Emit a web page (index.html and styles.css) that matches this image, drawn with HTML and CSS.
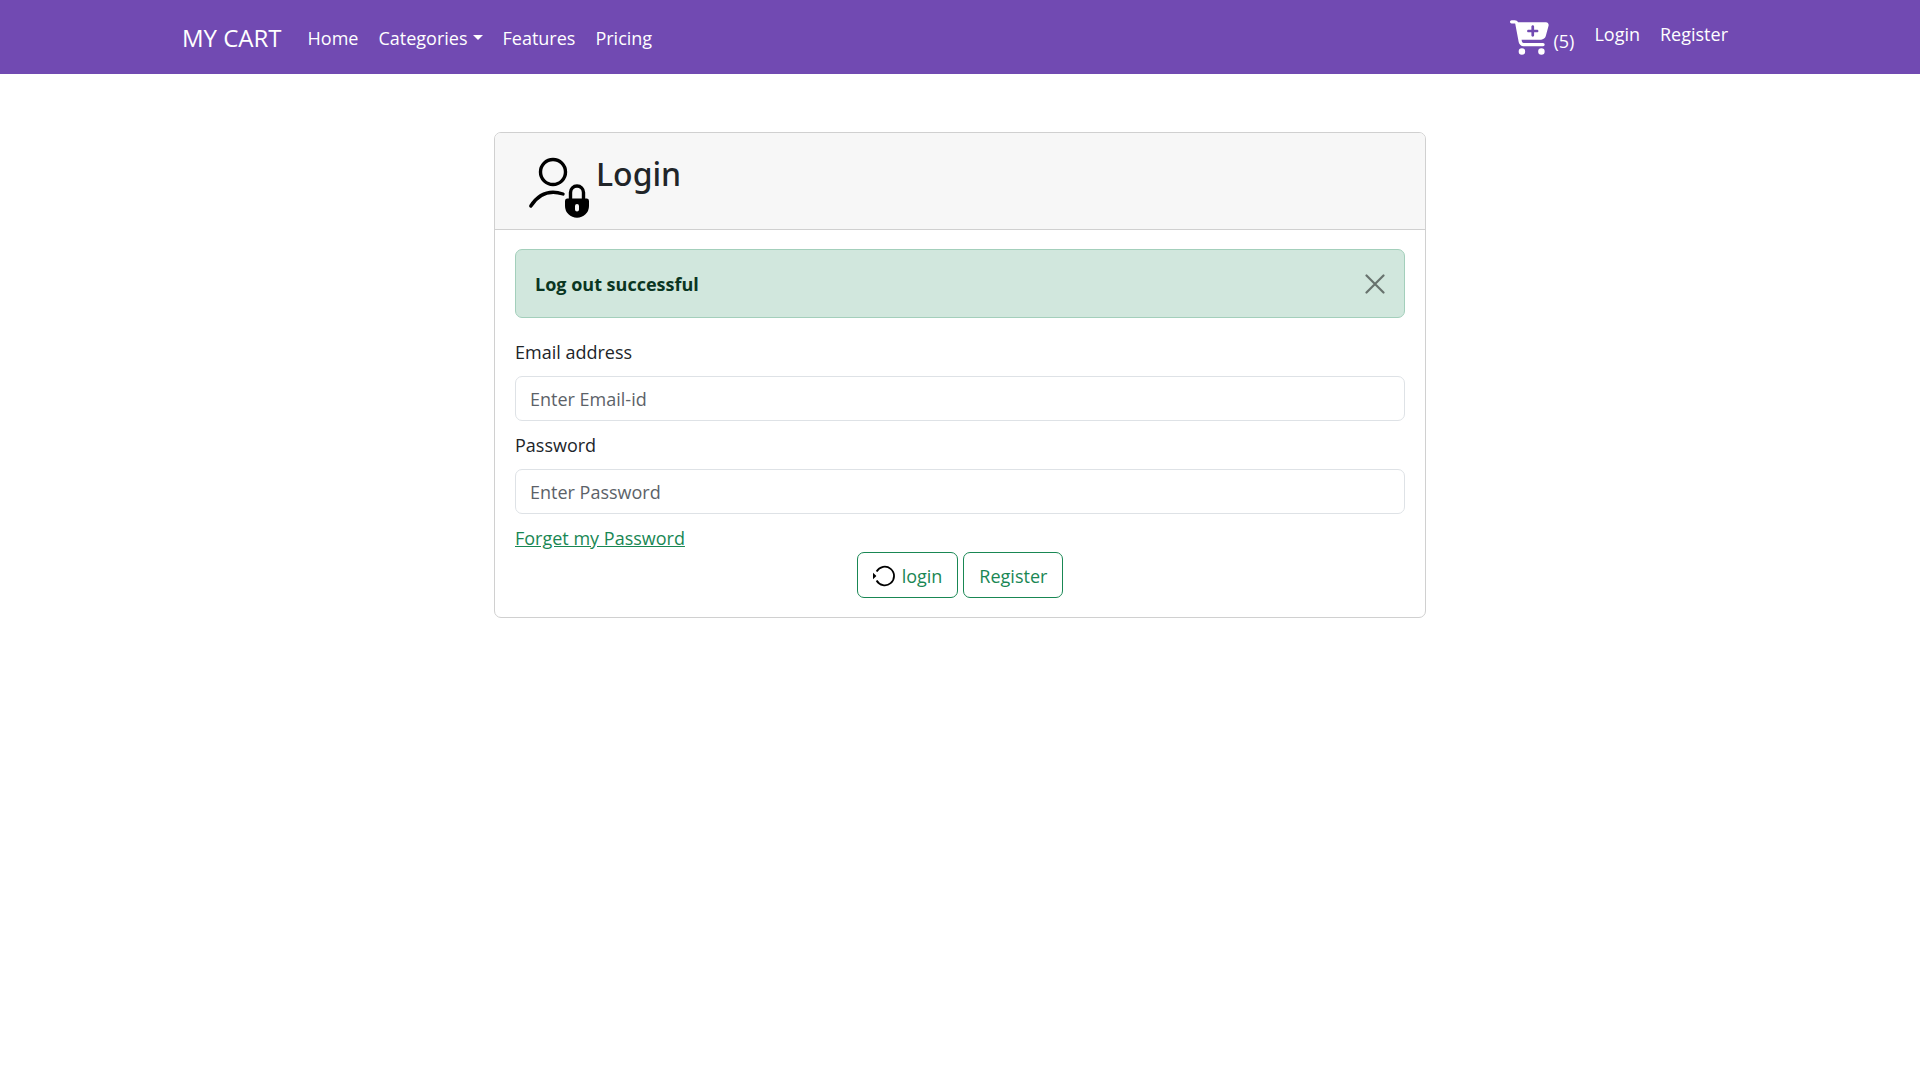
FILE: index.html
```html
<!DOCTYPE html>
<html lang="en">
<head>
<meta charset="utf-8">
<meta name="viewport" content="width=device-width, initial-scale=1">
<title>Login</title>
<link rel="stylesheet" href="styles.css">
</head>
<body>
<nav class="navbar">
  <div class="container">
    <a class="brand" href="#">MY CART</a>
    <ul class="nav-list">
      <li><a class="nav-link" href="#">Home</a></li>
      <li><a class="nav-link dropdown" href="#">Categories</a></li>
      <li><a class="nav-link" href="#">Features</a></li>
      <li><a class="nav-link" href="#">Pricing</a></li>
    </ul>
    <ul class="nav-list nav-user">
      <li><a class="nav-link cart" href="#" aria-label="Cart, 5 items">
        <svg class="cart-icon" viewBox="0 0 576 512" aria-hidden="true"><path fill="currentColor" d="M0 24C0 10.7 10.7 0 24 0H69.5c22 0 41.5 12.8 50.6 32h411c26.3 0 45.5 25 38.6 50.4l-41 152.3c-8.500 31.400-37 53.300-69.500 53.300H170.700l5.400 28.500c2.200 11.300 12.100 19.500 23.600 19.500H488c13.300 0 24 10.700 24 24s-10.700 24-24 24H199.700c-34.600 0-64.300-24.600-70.700-58.500L77.400 54.500c-.7-3.800-4-6.500-7.900-6.500H24C10.700 48 0 37.300 0 24zM128 464a48 48 0 1 1 96 0 48 48 0 1 1 -96 0zm336-48a48 48 0 1 1 0 96 48 48 0 1 1 0-96zM252 160c0 11 9 20 20 20h44v44c0 11 9 20 20 20s20-9 20-20V180h44c11 0 20-9 20-20s-9-20-20-20H356V96c0-11-9-20-20-20s-20 9-20 20v44H272c-11 0-20 9-20 20z"/></svg>
        <span>(5)</span></a></li>
      <li><a class="nav-link" href="#">Login</a></li>
      <li><a class="nav-link" href="#">Register</a></li>
    </ul>
  </div>
</nav>

<main class="page">
  <section class="card">
    <header class="card-header">
      <svg class="user-icon" viewBox="0 0 66 68" aria-hidden="true">
        <g fill="none" stroke="#000" stroke-width="3.400" stroke-linecap="round">
          <circle cx="28" cy="19" r="12.500"/>
          <path d="M5.800 53C13 42 24 36.500 38 41"/>
          <path d="M45.500 47V39.500a6.500 6.500 0 0 1 13 0V47"/>
        </g>
        <path fill="#000" fill-rule="evenodd" d="M42 45.500H62Q64 45.500 64 48V53a12 11.800 0 0 1-24 0V48Q40 45.500 42 45.500zM52 51a2 2 0 0 0-2 2v3.500a2 2 0 0 0 4 0V53a2 2 0 0 0-2-2z"/>
      </svg>
      <h1 class="card-title">Login</h1>
    </header>
    <div class="card-body">
      <div class="alert" role="alert">
        <strong>Log out successful</strong>
        <button class="close" type="button" aria-label="Close">
          <svg viewBox="0 0 20 20" aria-hidden="true"><path d="M1.500 1.500 18.500 18.500M18.500 1.500 1.500 18.500" fill="none" stroke="#000" stroke-width="2.200" stroke-linecap="round"/></svg>
        </button>
      </div>
      <form class="form">
        <label for="email">Email address</label>
        <input id="email" type="email" placeholder="Enter Email-id">
        <label for="password">Password</label>
        <input id="password" type="password" placeholder="Enter Password">
        <a class="forgot" href="#">Forget my Password</a>
        <div class="actions">
          <button class="btn" type="submit">
            <svg class="spin-icon" viewBox="0 0 24 22" aria-hidden="true"><path d="M3.600 6.500A9.300 9.300 0 1 1 3.600 15.500" fill="none" stroke="#000" stroke-width="1.800"/><path d="M0 7.800 3.400 11 0 14.200z"/></svg>
            login</button>
          <button class="btn" type="button">Register</button>
        </div>
      </form>
    </div>
  </section>
</main>
</body>
</html>
```
FILE: styles.css
```css
*, *::before, *::after { box-sizing: border-box; }

body {
  margin: 0;
  background: #fff;
  color: #212529;
  font: 18px/28px "Open Sans", "Noto Sans", sans-serif;
}

.navbar { background: #714ab2; color: #fff; }

.container {
  display: flex;
  align-items: center;
  max-width: 1584px;
  min-height: 74px;
  margin: 0 auto;
  padding: 10px 14px 8px;
}

.brand {
  margin-right: 16px;
  color: inherit;
  font-size: 24px;
  text-decoration: none;
}

.nav-list {
  display: flex;
  margin: 0;
  padding: 0;
  list-style: none;
}

.nav-user { margin-left: auto; }

.nav-link {
  display: block;
  padding: 10px;
  color: inherit;
  text-decoration: none;
}

.nav-user .nav-link { padding: 7px 10px; }

.nav-user .cart {
  display: flex;
  align-items: flex-start;
  gap: 4px;
  padding-bottom: 9px;
}

.cart span { margin-top: 7px; }

.dropdown::after {
  content: "";
  display: inline-block;
  margin-left: 5px;
  vertical-align: 5px;
  border: 5px solid transparent;
  border-top-color: currentColor;
  border-bottom: 0;
}

.cart-icon { width: 39px; height: 35px; }

.page { padding: 58px 16px; }

.card {
  max-width: 932px;
  margin: 0 auto;
  border: 1px solid #d0d0d0;
  border-radius: 7px;
  overflow: hidden;
}

.card-header {
  display: flex;
  gap: 5px;
  padding: 20px 30px 8px;
  background: #f7f7f7;
  border-bottom: 1px solid #d0d0d0;
}

.user-icon { width: 66px; height: 68px; }

.card-title {
  margin: 0;
  font-family: "Noto Sans", "Open Sans", sans-serif;
  font-size: 32px;
  line-height: 42px;
  font-weight: 500;
}

.card-body { padding: 19px 20px; }

.alert {
  display: flex;
  justify-content: space-between;
  align-items: center;
  min-height: 69px;
  margin-bottom: 20px;
  padding: 19px;
  background: #d1e7dd;
  border: 1px solid #a3cfbb;
  border-radius: 7px;
  color: #0a3622;
}

.close {
  width: 20px;
  height: 20px;
  padding: 0;
  border: 0;
  background: none;
  opacity: .5;
}

.close svg { display: block; }

.form {
  display: flex;
  flex-direction: column;
}

.form label { margin-bottom: 10px; }

.form input {
  width: 100%;
  margin: 0 0 10px;
  padding: 9px 14px 7px;
  border: 1px solid #dee2e6;
  border-radius: 7px;
  background: #fff;
  color: inherit;
  font: inherit;
  line-height: 27px;
}

.form input::placeholder { color: #5c6268; opacity: 1; }

.forgot { align-self: flex-start; color: #198754; }

.actions {
  display: flex;
  justify-content: center;
  align-items: flex-end;
  gap: 5px;
}

.btn {
  display: flex;
  align-items: center;
  gap: 5px;
  padding: 9px 15px 7px;
  border: 1px solid #198754;
  border-radius: 7px;
  background: #fff;
  color: #198754;
  font: inherit;
}

.spin-icon { width: 24px; height: 22px; }
```
